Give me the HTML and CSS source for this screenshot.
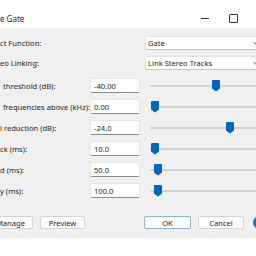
FILE: index.html
```html
<!DOCTYPE html>
<html lang="en">
<head>
  <meta charset="UTF-8">
  <title>Noise Gate</title>
  <link rel="stylesheet" href="styles.css">
</head>
<body>

<div class="window">
  <!-- title bar -->
  <div class="titlebar">
    <span class="title">e Gate</span>
    <div class="controls">
      <span class="ctl-min"></span>
      <span class="ctl-max"></span>
    </div>
  </div>

  <div class="dialog">
    <div class="combo-row">
      <span class="label wide">ct Function:</span>
      <div class="combo">Gate<span class="chev"></span></div>
    </div>
    <div class="combo-row">
      <span class="label wide">eo Linking:</span>
      <div class="combo">Link Stereo Tracks<span class="chev"></span></div>
    </div>

    <div class="slider-row">
      <span class="label lead">threshold (dB):</span>
      <div class="num">-40.00</div>
      <div class="slider"><span class="thumb" style="left:62px"></span></div>
    </div>
    <div class="slider-row">
      <span class="label lead">frequencies above (kHz):</span>
      <div class="num">0.00</div>
      <div class="slider"><span class="thumb" style="left:1px"></span></div>
    </div>
    <div class="slider-row">
      <span class="label">l reduction (dB):</span>
      <div class="num">-24.0</div>
      <div class="slider"><span class="thumb" style="left:76px"></span></div>
    </div>
    <div class="slider-row">
      <span class="label">ck (ms):</span>
      <div class="num">10.0</div>
      <div class="slider"><span class="thumb" style="left:1px"></span></div>
    </div>
    <div class="slider-row">
      <span class="label">d (ms):</span>
      <div class="num">50.0</div>
      <div class="slider"><span class="thumb" style="left:4px"></span></div>
    </div>
    <div class="slider-row">
      <span class="label">y (ms):</span>
      <div class="num">100.0</div>
      <div class="slider"><span class="thumb" style="left:4px"></span></div>
    </div>

    <div class="buttons">
      <div class="btn-group left">
        <button class="btn manage">Manage</button>
        <button class="btn preview">Preview</button>
      </div>
      <div class="btn-group right">
        <button class="btn ok">OK</button>
        <button class="btn cancel">Cancel</button>
        <span class="help"></span>
      </div>
    </div>
  </div>
</div>

</body>
</html>
```

FILE: styles.css
```css
html, body {
  margin: 0;
  overflow: hidden;
  background: #ffffff;
}

body {
  font-family: 'Noto Sans', 'Open Sans', sans-serif;
  font-size: 7.6px;
  color: #1f1f1f;
  width: 256px;
  height: 256px;
}

.window {
  width: 266px;
}

.titlebar {
  height: 28px;
  background: #ffffff;
  display: flex;
  align-items: center;
  padding-top: 8px;
  box-sizing: border-box;
}

.title {
  font-size: 8px;
  flex: 1;
}

.controls {
  display: flex;
  align-items: center;
  gap: 20px;
  width: 65px;
}

.ctl-min {
  width: 8px;
  height: 1px;
  background: #333;
}

.ctl-max {
  width: 7px;
  height: 7px;
  border: 1px solid #333;
  border-radius: 1px;
}

.dialog {
  background: #f0f0f0;
  padding: 5px 0 9px;
}

.combo-row,
.slider-row {
  display: flex;
  align-items: center;
}

.combo-row {
  height: 20px;
}

.slider-row {
  height: 21px;
}

.combo-row:nth-child(2) {
  margin-bottom: 2px;
}

.label {
  width: 90px;
  flex-shrink: 0;
  white-space: nowrap;
}

.label.wide {
  width: 145px;
}

.label.lead {
  padding-left: 3px;
  box-sizing: border-box;
}

.combo {
  flex: 1;
  height: 14px;
  background: #ffffff;
  border: 1px solid #e3e3e3;
  border-bottom-color: #c4c4c4;
  border-radius: 2px;
  box-sizing: border-box;
  display: flex;
  align-items: center;
  justify-content: space-between;
  padding: 0 8px 0 2px;
}

.chev {
  width: 2px;
  height: 2px;
  border-right: 1px solid #888;
  border-bottom: 1px solid #888;
  transform: rotate(45deg);
  margin-top: -2px;
}

.num {
  width: 50px;
  height: 15px;
  flex-shrink: 0;
  background: #ffffff;
  border: 1px solid #e6e6e6;
  border-bottom: 1px solid #8a8a8a;
  border-radius: 2px;
  box-sizing: border-box;
  display: flex;
  align-items: center;
  padding-left: 3px;
}

.slider {
  flex: 1;
  margin-left: 10px;
  height: 2px;
  background: #d2d2d2;
  border-radius: 1px;
  position: relative;
}

.thumb {
  position: absolute;
  top: -5px;
  width: 8px;
  height: 12px;
  background: #0067c0;
  border-radius: 1px 1px 0 0;
  clip-path: polygon(0 0, 100% 0, 100% 75%, 50% 100%, 0 75%);
}

.buttons {
  display: flex;
  justify-content: space-between;
  margin-top: 15px;
}

.btn-group {
  display: flex;
  align-items: center;
  gap: 7px;
}

.btn {
  font-family: inherit;
  font-size: 7.6px;
  color: #1f1f1f;
  height: 13px;
  padding: 0;
  background: #fdfdfd;
  border: 1px solid #d4d4d4;
  border-radius: 2px;
}

.manage {
  width: 45px;
  margin-left: -12px;
}

.preview {
  width: 45px;
}

.ok {
  width: 47px;
  border-color: #8fb3d8;
}

.cancel {
  width: 46px;
}

.help {
  width: 13px;
  height: 13px;
  border-radius: 50%;
  background: #1f6fc4;
  margin-left: 2px;
}
```
